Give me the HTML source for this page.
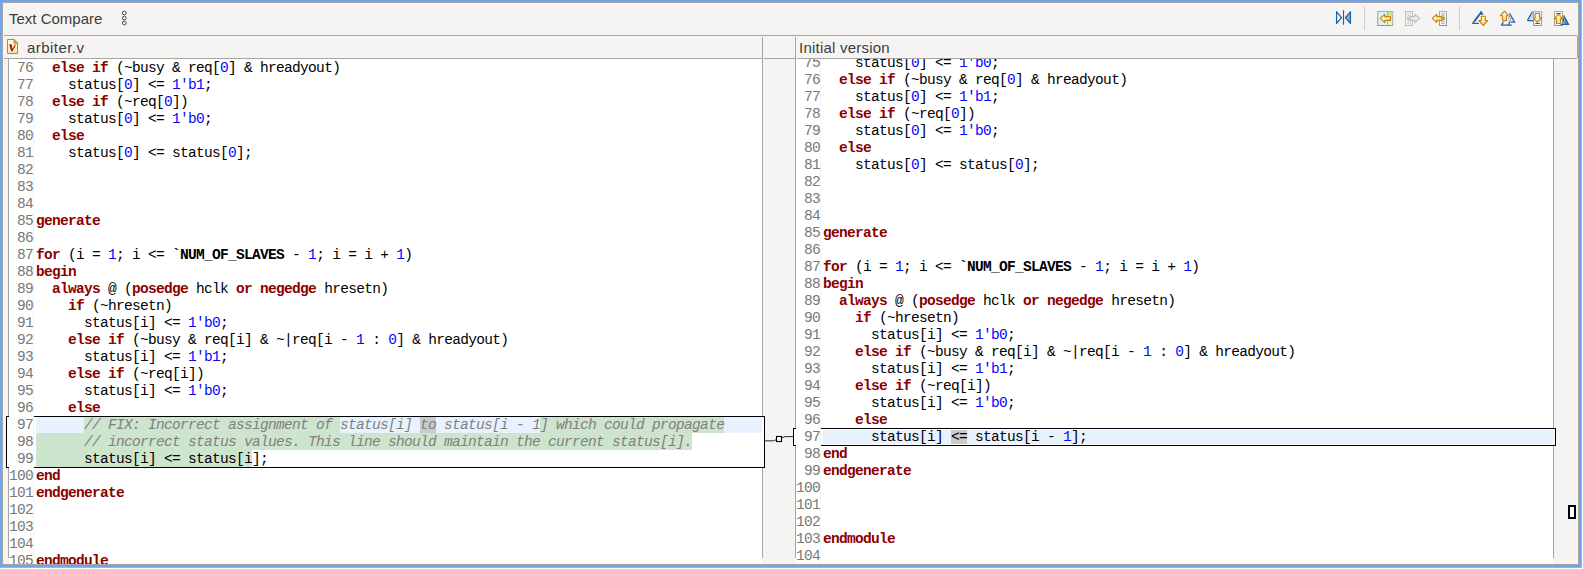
<!DOCTYPE html>
<html><head><meta charset="utf-8">
<style>
*{margin:0;padding:0;box-sizing:border-box}
html,body{width:1583px;height:569px;overflow:hidden;background:#fff}
body{position:relative;font-family:"Liberation Sans",sans-serif}
.a{position:absolute}
#shade{left:0;top:0;width:1582px;height:568px;background:#b4b0aa}
#blue{left:0;top:0;width:1581px;height:567px;background:#6ca6ea}
#inner{left:2px;top:2px;width:1577px;height:563px;background:#a8a6a2}
#win{left:3px;top:3px;width:1575px;height:561px;background:#f5f4f2;overflow:hidden}
.hl{position:absolute;height:1px;background:#a5a5a4}
.vl{position:absolute;width:1px;background:#a5a5a4}
.title{position:absolute;font-size:15px;color:#3c3c3c;white-space:pre;line-height:18px}
.pane{position:absolute;top:59px;height:505px;background:#fff;overflow:hidden}
.r{position:absolute;left:0;height:17px;width:100%;white-space:pre;font-family:"Liberation Mono",monospace;font-size:14.5px;letter-spacing:-0.7px;line-height:17px;color:#000}
.ln{position:absolute;left:0;width:24px;text-align:right;color:#787878}
.tx{position:absolute;}
#L .ln{left:0px}
#L .tx{left:27px}
#R .ln{left:0px}
#R .tx{left:27px}
b.k{color:#8c0000;font-weight:bold}
b.m{font-weight:bold}
.n{color:#0808f8}
i.c{color:#808080;font-style:italic}
.g{background:#cde4cd}
.t{background:#cbcbcb}
</style></head><body>
<div class="a" id="shade"></div>
<div class="a" id="blue"></div>
<div class="a" id="inner"></div>
<div class="a" id="win"></div>

<!-- toolbar -->
<div class="title" style="left:9px;top:10px">Text Compare</div>
<svg class="a" style="left:120px;top:9px" width="9" height="18" viewBox="0 0 9 18">
 <circle cx="4.3" cy="4" r="1.9" fill="none" stroke="#474747" stroke-width="0.95"/>
 <circle cx="4.3" cy="9.1" r="1.9" fill="none" stroke="#474747" stroke-width="0.95"/>
 <circle cx="4.3" cy="14" r="1.9" fill="none" stroke="#474747" stroke-width="0.95"/>
</svg>


<!-- toolbar icons -->
<svg class="a" style="left:1332px;top:6px" width="24" height="22" viewBox="0 0 24 22">
 <path d="M4.6 5.8 V17.4 L9.5 11.6 Z" fill="#fff" stroke="#1d62a6" stroke-width="1.3" stroke-linejoin="round"/>
 <path d="M11.5 4.3 V18.8" stroke="#1d62a6" stroke-width="1.2"/>
 <path d="M18.4 5.8 V17.4 L13.5 11.6 Z" fill="#8fb0d0" stroke="#1d62a6" stroke-width="1.3" stroke-linejoin="round"/>
</svg>
<div class="vl" style="left:1364px;top:6px;height:24px;background:#cfcdc9"></div>
<svg class="a" style="left:1374px;top:6px" width="24" height="24" viewBox="0 0 24 24">
 <defs><linearGradient id="bd1" x1="0" y1="0" x2="0" y2="1"><stop offset="0" stop-color="#bfae7c"/><stop offset="1" stop-color="#8a94ac"/></linearGradient>
 <linearGradient id="gr1" x1="0" y1="0" x2="0" y2="1"><stop offset="0" stop-color="#bde47a"/><stop offset="1" stop-color="#eefad0"/></linearGradient>
 <linearGradient id="ar1" x1="0" y1="0" x2="1" y2="0"><stop offset="0" stop-color="#fffbea"/><stop offset="1" stop-color="#f9dc92"/></linearGradient></defs>
 <rect x="3.7" y="5.5" width="15" height="14" fill="#d6f1fc" stroke="url(#bd1)" stroke-width="1"/>
 <rect x="13.6" y="6" width="4.6" height="13" fill="url(#gr1)"/>
 <path d="M13.5 6 V19" stroke="#9aa2b0" stroke-width="0.8"/>
 <path d="M6.2 12.4 L10.8 8.4 V10.6 H16.5 V14.4 H10.8 V16.6 Z" fill="url(#ar1)" stroke="#c4820e" stroke-width="1.1" stroke-linejoin="round"/>
</svg>
<svg class="a" style="left:1401px;top:6px" width="24" height="24" viewBox="0 0 24 24">
 <rect x="4.5" y="5.5" width="7" height="14" fill="#f2f2f2" stroke="#bdbdbd" stroke-width="1"/>
 <path d="M6.3 7.8 H9.8 M6.3 9.8 H9.8 M6.3 15.3 H9.8 M6.3 17.3 H9.8" stroke="#c8c8c8" stroke-width="0.9"/>
 <rect x="6" y="11" width="2.8" height="3" fill="#c4c4c4"/>
 <path d="M18.5 12.4 L13.8 8.4 V10.6 H9 V14.4 H13.8 V16.6 Z" fill="#eeeeee" stroke="#bcbcbc" stroke-width="1.1" stroke-linejoin="round"/>
</svg>
<svg class="a" style="left:1428px;top:6px" width="24" height="24" viewBox="0 0 24 24">
 <rect x="11.5" y="5.5" width="7" height="14" fill="#f4f8fe" stroke="url(#bd1)" stroke-width="1"/>
 <path d="M13.2 7.8 H16.8 M13.2 9.8 H16.8 M13.2 15.3 H16.8 M13.2 17.3 H16.8" stroke="#8c9cc4" stroke-width="0.9"/>
 <rect x="14" y="10.8" width="3" height="3.2" fill="#86bd3c"/>
 <path d="M4.2 12.4 L8.8 8.4 V10.6 H14 V14.4 H8.8 V16.6 Z" fill="url(#ar1)" stroke="#c4820e" stroke-width="1.1" stroke-linejoin="round"/>
</svg>
<div class="vl" style="left:1459px;top:6px;height:24px;background:#cfcdc9"></div>
<svg class="a" style="left:1468px;top:6px" width="24" height="24" viewBox="0 0 24 24">
 <defs><linearGradient id="ad" x1="0" y1="0" x2="0" y2="1"><stop offset="0" stop-color="#fffbea"/><stop offset="1" stop-color="#f9dc92"/></linearGradient></defs>
 <path d="M4.4 17.4 L13.4 5.4 M4.4 17.4 H10.8 M6.6 15.6 L11.6 8.8" fill="none" stroke="#1d62a6" stroke-width="1.2"/>
 <path d="M13.4 5 L15.6 8.7 H11.4 Z" fill="#1d62a6"/>
 <path d="M13.3 10.3 H17.3 V14.5 H19.8 L15.3 19.3 L10.8 14.5 H13.3 Z" fill="url(#ad)" stroke="#c4820e" stroke-width="1.1" stroke-linejoin="round"/>
</svg>
<svg class="a" style="left:1496px;top:6px" width="24" height="24" viewBox="0 0 24 24">
 <path d="M5.2 19.2 L7.6 16 M5.2 19.2 H15.8 M12 19 L14 16 M13.5 7.3 L18.6 16.2 H14.8" fill="none" stroke="#1d62a6" stroke-width="1.2"/>
 <path d="M12.5 12.5 L14.2 9.5 M12.8 16 L15.5 12" fill="none" stroke="#1d62a6" stroke-width="0.8"/>
 <path d="M8.5 5.2 L12.8 9.8 H10.5 V14.6 H6.6 V9.8 H4.2 Z" fill="url(#ad)" stroke="#c4820e" stroke-width="1.1" stroke-linejoin="round"/>
</svg>
<svg class="a" style="left:1523px;top:6px" width="24" height="24" viewBox="0 0 24 24">
 <rect x="10.5" y="5.5" width="8" height="14" fill="#f4f8fe" stroke="url(#bd1)" stroke-width="1"/>
 <path d="M4.3 14.6 L9.5 5.6 M4.3 14.6 H10.5" fill="none" stroke="#1d62a6" stroke-width="1.2"/>
 <path d="M7.2 13.6 L10.3 8.2" fill="none" stroke="#5b8cc2" stroke-width="0.7"/>
 <path d="M12.3 17.5 H16.8" stroke="#1d62a6" stroke-width="1"/>
 <path d="M12.2 7.4 H16.6 V11.8 H18.8 L14.4 16.3 L10.2 11.8 H12.2 Z" fill="url(#ad)" stroke="#c4820e" stroke-width="1.1" stroke-linejoin="round"/>
</svg>
<svg class="a" style="left:1550px;top:6px" width="24" height="24" viewBox="0 0 24 24">
 <rect x="4.5" y="5.5" width="8" height="14" fill="#f4f8fe" stroke="url(#bd1)" stroke-width="1"/>
 <path d="M6.2 7.5 H10.8" stroke="#1d62a6" stroke-width="1"/>
 <path d="M13.6 9.4 L18.4 18.3 H15 Z" fill="#5f8fc4"/>
 <path d="M10.5 18.4 H18.6 L13.6 9.4 M14.2 17.5 L13 11.5" fill="none" stroke="#1d62a6" stroke-width="1.2"/>
 <path d="M8.5 8.2 L12.7 12.6 H10.6 V17.5 H6.4 V12.6 H4.3 Z" fill="url(#ad)" stroke="#c4820e" stroke-width="1.1" stroke-linejoin="round"/>
</svg>
<div class="hl" style="left:4px;top:35px;width:1573px"></div>

<!-- header -->
<svg class="a" style="left:6px;top:38px" width="14" height="17" viewBox="0 0 14 17">
 <defs><linearGradient id="fi" x1="0" y1="0" x2="0" y2="1"><stop offset="0" stop-color="#fff6dc"/><stop offset="1" stop-color="#fbe6a8"/></linearGradient></defs>
 <path d="M1.5 1.5 H8 L11.5 5 V15.5 H1.5 Z" fill="url(#fi)" stroke="#b08a2e" stroke-width="1"/>
 <path d="M8 1.5 V5.2 H11.5 Z" fill="#cfa858" stroke="#b08a2e" stroke-width="0.8"/>
 <path d="M3.2 6.6 L5.6 6.3 L6.3 11 L8.8 6.8 L10 6.6 L6.2 13.5 L5.3 13.6 Z" fill="#9c1414"/>
</svg>
<div class="title" style="left:27px;top:39px;letter-spacing:0.45px">arbiter.v</div>
<div class="title" style="left:799px;top:39px;letter-spacing:0.22px">Initial version</div>
<div class="hl" style="left:4px;top:58px;width:1573px"></div>
<div class="vl" style="left:1577px;top:36px;height:22px"></div>

<!-- left pane -->
<div class="pane" id="L" style="left:9px;width:753px">
<div class="a" style="left:27px;top:358px;width:726px;height:16px;background:#e8f2fe"></div>
<div class="a g" style="left:75px;top:358px;width:256px;height:16px"></div>
<div class="a g" style="left:531px;top:358px;width:184px;height:16px"></div>
<div class="a t" style="left:411px;top:358px;width:16px;height:16px"></div>
<div class="a g" style="left:27px;top:374px;width:656px;height:17px"></div>
<div class="a g" style="left:27px;top:391px;width:216px;height:17px"></div>
<div class="a" style="left:24px;top:0;width:1px;height:505px;background:#f3f3f3"></div>
<div class="r" style="top:1px"><span class="ln">76</span><span class="tx">  <b class="k">else</b> <b class="k">if</b> (~busy &amp; req[<span class="n">0</span>] &amp; hreadyout)</span></div>
<div class="r" style="top:18px"><span class="ln">77</span><span class="tx">    status[<span class="n">0</span>] &lt;= <span class="n">1&#x27;b1</span>;</span></div>
<div class="r" style="top:35px"><span class="ln">78</span><span class="tx">  <b class="k">else</b> <b class="k">if</b> (~req[<span class="n">0</span>])</span></div>
<div class="r" style="top:52px"><span class="ln">79</span><span class="tx">    status[<span class="n">0</span>] &lt;= <span class="n">1&#x27;b0</span>;</span></div>
<div class="r" style="top:69px"><span class="ln">80</span><span class="tx">  <b class="k">else</b></span></div>
<div class="r" style="top:86px"><span class="ln">81</span><span class="tx">    status[<span class="n">0</span>] &lt;= status[<span class="n">0</span>];</span></div>
<div class="r" style="top:103px"><span class="ln">82</span><span class="tx"></span></div>
<div class="r" style="top:120px"><span class="ln">83</span><span class="tx"></span></div>
<div class="r" style="top:137px"><span class="ln">84</span><span class="tx"></span></div>
<div class="r" style="top:154px"><span class="ln">85</span><span class="tx"><b class="k">generate</b></span></div>
<div class="r" style="top:171px"><span class="ln">86</span><span class="tx"></span></div>
<div class="r" style="top:188px"><span class="ln">87</span><span class="tx"><b class="k">for</b> (i = <span class="n">1</span>; i &lt;= <b class="m">`NUM_OF_SLAVES</b> - <span class="n">1</span>; i = i + <span class="n">1</span>)</span></div>
<div class="r" style="top:205px"><span class="ln">88</span><span class="tx"><b class="k">begin</b></span></div>
<div class="r" style="top:222px"><span class="ln">89</span><span class="tx">  <b class="k">always</b> @ (<b class="k">posedge</b> hclk <b class="k">or</b> <b class="k">negedge</b> hresetn)</span></div>
<div class="r" style="top:239px"><span class="ln">90</span><span class="tx">    <b class="k">if</b> (~hresetn)</span></div>
<div class="r" style="top:256px"><span class="ln">91</span><span class="tx">      status[i] &lt;= <span class="n">1&#x27;b0</span>;</span></div>
<div class="r" style="top:273px"><span class="ln">92</span><span class="tx">    <b class="k">else</b> <b class="k">if</b> (~busy &amp; req[i] &amp; ~|req[i - <span class="n">1</span> : <span class="n">0</span>] &amp; hreadyout)</span></div>
<div class="r" style="top:290px"><span class="ln">93</span><span class="tx">      status[i] &lt;= <span class="n">1&#x27;b1</span>;</span></div>
<div class="r" style="top:307px"><span class="ln">94</span><span class="tx">    <b class="k">else</b> <b class="k">if</b> (~req[i])</span></div>
<div class="r" style="top:324px"><span class="ln">95</span><span class="tx">      status[i] &lt;= <span class="n">1&#x27;b0</span>;</span></div>
<div class="r" style="top:341px"><span class="ln">96</span><span class="tx">    <b class="k">else</b></span></div>
<div class="r" style="top:358px"><span class="ln">97</span><span class="tx">      <i class="c">// FIX: Incorrect assignment of status[i] to status[i - 1] which could propagate</i></span></div>
<div class="r" style="top:375px"><span class="ln">98</span><span class="tx">      <i class="c">// incorrect status values. This line should maintain the current status[i].</i></span></div>
<div class="r" style="top:392px"><span class="ln">99</span><span class="tx">      status[i] &lt;= status[i];</span></div>
<div class="r" style="top:409px"><span class="ln">100</span><span class="tx"><b class="k">end</b></span></div>
<div class="r" style="top:426px"><span class="ln">101</span><span class="tx"><b class="k">endgenerate</b></span></div>
<div class="r" style="top:443px"><span class="ln">102</span><span class="tx"></span></div>
<div class="r" style="top:460px"><span class="ln">103</span><span class="tx"></span></div>
<div class="r" style="top:477px"><span class="ln">104</span><span class="tx"></span></div>
<div class="r" style="top:494px"><span class="ln">105</span><span class="tx"><b class="k">endmodule</b></span></div>
</div>
<div class="vl" style="left:8px;top:59px;height:357px"></div>
<div class="vl" style="left:8px;top:468px;height:90px"></div>
<div class="vl" style="left:762px;top:37px;height:379px"></div>
<div class="vl" style="left:762px;top:468px;height:90px"></div>
<div class="a" style="left:762px;top:417px;width:2px;height:50px;background:#fff"></div>

<!-- right pane -->
<div class="pane" id="R" style="left:796px;width:757px">
<div class="a" style="left:27px;top:371px;width:730px;height:14px;background:#e8f2fe"></div>
<div class="a t" style="left:155px;top:371px;width:16px;height:14px"></div>
<div class="a" style="left:24px;top:0;width:1px;height:505px;background:#f3f3f3"></div>
<div class="r" style="top:-4px"><span class="ln">75</span><span class="tx">    status[<span class="n">0</span>] &lt;= <span class="n">1&#x27;b0</span>;</span></div>
<div class="r" style="top:13px"><span class="ln">76</span><span class="tx">  <b class="k">else</b> <b class="k">if</b> (~busy &amp; req[<span class="n">0</span>] &amp; hreadyout)</span></div>
<div class="r" style="top:30px"><span class="ln">77</span><span class="tx">    status[<span class="n">0</span>] &lt;= <span class="n">1&#x27;b1</span>;</span></div>
<div class="r" style="top:47px"><span class="ln">78</span><span class="tx">  <b class="k">else</b> <b class="k">if</b> (~req[<span class="n">0</span>])</span></div>
<div class="r" style="top:64px"><span class="ln">79</span><span class="tx">    status[<span class="n">0</span>] &lt;= <span class="n">1&#x27;b0</span>;</span></div>
<div class="r" style="top:81px"><span class="ln">80</span><span class="tx">  <b class="k">else</b></span></div>
<div class="r" style="top:98px"><span class="ln">81</span><span class="tx">    status[<span class="n">0</span>] &lt;= status[<span class="n">0</span>];</span></div>
<div class="r" style="top:115px"><span class="ln">82</span><span class="tx"></span></div>
<div class="r" style="top:132px"><span class="ln">83</span><span class="tx"></span></div>
<div class="r" style="top:149px"><span class="ln">84</span><span class="tx"></span></div>
<div class="r" style="top:166px"><span class="ln">85</span><span class="tx"><b class="k">generate</b></span></div>
<div class="r" style="top:183px"><span class="ln">86</span><span class="tx"></span></div>
<div class="r" style="top:200px"><span class="ln">87</span><span class="tx"><b class="k">for</b> (i = <span class="n">1</span>; i &lt;= <b class="m">`NUM_OF_SLAVES</b> - <span class="n">1</span>; i = i + <span class="n">1</span>)</span></div>
<div class="r" style="top:217px"><span class="ln">88</span><span class="tx"><b class="k">begin</b></span></div>
<div class="r" style="top:234px"><span class="ln">89</span><span class="tx">  <b class="k">always</b> @ (<b class="k">posedge</b> hclk <b class="k">or</b> <b class="k">negedge</b> hresetn)</span></div>
<div class="r" style="top:251px"><span class="ln">90</span><span class="tx">    <b class="k">if</b> (~hresetn)</span></div>
<div class="r" style="top:268px"><span class="ln">91</span><span class="tx">      status[i] &lt;= <span class="n">1&#x27;b0</span>;</span></div>
<div class="r" style="top:285px"><span class="ln">92</span><span class="tx">    <b class="k">else</b> <b class="k">if</b> (~busy &amp; req[i] &amp; ~|req[i - <span class="n">1</span> : <span class="n">0</span>] &amp; hreadyout)</span></div>
<div class="r" style="top:302px"><span class="ln">93</span><span class="tx">      status[i] &lt;= <span class="n">1&#x27;b1</span>;</span></div>
<div class="r" style="top:319px"><span class="ln">94</span><span class="tx">    <b class="k">else</b> <b class="k">if</b> (~req[i])</span></div>
<div class="r" style="top:336px"><span class="ln">95</span><span class="tx">      status[i] &lt;= <span class="n">1&#x27;b0</span>;</span></div>
<div class="r" style="top:353px"><span class="ln">96</span><span class="tx">    <b class="k">else</b></span></div>
<div class="r" style="top:370px"><span class="ln">97</span><span class="tx">      status[i] &lt;= status[i - <span class="n">1</span>];</span></div>
<div class="r" style="top:387px"><span class="ln">98</span><span class="tx"><b class="k">end</b></span></div>
<div class="r" style="top:404px"><span class="ln">99</span><span class="tx"><b class="k">endgenerate</b></span></div>
<div class="r" style="top:421px"><span class="ln">100</span><span class="tx"></span></div>
<div class="r" style="top:438px"><span class="ln">101</span><span class="tx"></span></div>
<div class="r" style="top:455px"><span class="ln">102</span><span class="tx"></span></div>
<div class="r" style="top:472px"><span class="ln">103</span><span class="tx"><b class="k">endmodule</b></span></div>
<div class="r" style="top:489px"><span class="ln">104</span><span class="tx"></span></div>
</div>
<div class="vl" style="left:795px;top:37px;height:391px"></div>
<div class="vl" style="left:795px;top:446px;height:112px"></div>
<div class="vl" style="left:1553px;top:59px;height:369px"></div>
<div class="vl" style="left:1553px;top:446px;height:112px"></div>


<!-- diff boxes -->
<div class="a" style="left:34px;top:416px;width:731px;height:52px;border:1px solid #000;border-left:none"></div>
<div class="a" style="left:6px;top:416px;width:3px;height:52px;border:1px solid #000;border-right:none;background:#fff"></div>
<div class="a" style="left:821px;top:428px;width:735px;height:18px;border:1px solid #000;border-left:none"></div>
<div class="a" style="left:793px;top:428px;width:3px;height:18px;border:1px solid #000;border-right:none;background:#fff"></div>
<svg class="a" style="left:760px;top:430px" width="40" height="16" viewBox="760 430 40 16">
 <path d="M765 440.8 H773.5 L776.5 439.6" fill="none" stroke="#222" stroke-width="0.95"/>
 <rect x="776.5" y="436.5" width="5" height="5" fill="#fff" stroke="#000" stroke-width="1.1"/>
 <path d="M781.5 438 L785 436.6 H793.5" fill="none" stroke="#222" stroke-width="0.95"/>
</svg>
<!-- overview ruler mark -->
<div class="a" style="left:1568px;top:505px;width:8px;height:14px;border:2px solid #000;background:#fff"></div>
<div class="a" style="left:763px;top:58px;width:1px;height:1px;background:#e6e5e3"></div>
<div class="a" style="left:796px;top:58px;width:1px;height:1px;background:#e6e5e3"></div>
</body></html>
